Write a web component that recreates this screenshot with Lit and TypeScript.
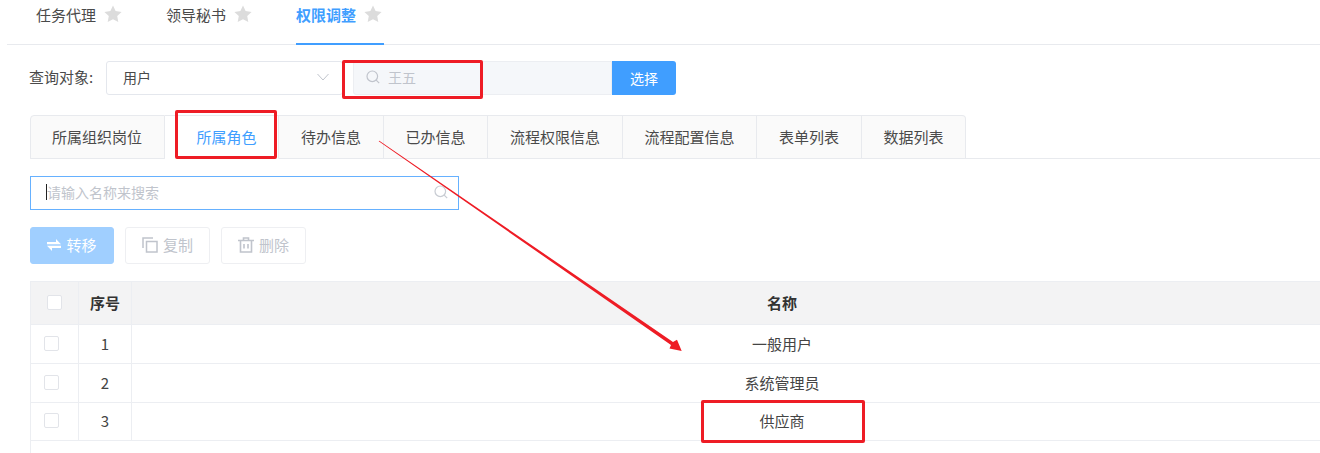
import { LitElement, html, css, svg } from "lit";
import { customElement } from "lit/decorators.js";

const star = html`<svg class="star" viewBox="0 0 18 18" width="18" height="18"><path d="M9 .6l2.600 5.500 6 .8-4.400 4.200 1.100 6L9 14.200 3.700 17.100l1.100-6L.4 6.900l6-.8z" fill="#dcdcdc"/></svg>`;
const searchIcon = (c: string) => html`<svg class="sicon" viewBox="0 0 14 14" width="14" height="14" fill="none" stroke=${c} stroke-width="1.2"><circle cx="6.300" cy="6.300" r="5.300"/><path d="M10.200 10.200l3 3"/></svg>`;

@customElement("app-root")
export class AppRoot extends LitElement {
  static styles = css`
    :host { display: block; position: relative; width: 1320px; height: 453px; overflow: hidden; background: #fff;
      font-family: "Noto Sans CJK SC", "Noto Sans", sans-serif; font-size: 15px; font-weight: 400; color: #4a4a4a; }
    .top { display: flex; height: 44px; margin-left: 7px; border-bottom: 1px solid #e8eaee; padding-left: 29px; }
    .top-tab { display: flex; align-items: flex-start; gap: 8px; height: 44px; margin-right: 44px; line-height: 30px; margin-bottom: -1px; }
    .top-tab.on { margin-right: 0; color: #409eff; font-weight: 700; border-bottom: 2px solid #409eff; height: 43px; padding-right: 2px; }
    .star { margin-top: 5px; }
    .query { display: flex; align-items: stretch; height: 34px; margin: 16px 0 0 29px; }
    .label { width: 77px; line-height: 31px; flex: none; }
    .select { width: 237px; box-sizing: border-box; border: 1px solid #e4e7ed; border-radius: 3px; display: flex; align-items: center; justify-content: space-between; padding: 0 13px 2px 16px; font-size: 14px; }
    .who { width: 259px; margin-left: 10px; box-sizing: border-box; background: #f5f7fa; border: 1px solid #eceef2; border-radius: 3px 0 0 3px; display: flex; align-items: center; gap: 8px; padding: 0 0 2px 12px; color: #c0c4cc; font-size: 14px; }
    .pick { width: 64px; background: #409eff; color: #fff; border-radius: 0 3px 3px 0; display: flex; align-items: center; justify-content: center; padding-bottom: 1px; box-sizing: border-box; font-size: 14px; }
    .tabs { display: flex; margin: 20px 0 0 30px; border-bottom: 1px solid #e8eaee; height: 43px; }
    .tab { padding: 0 21.75px; line-height: 42px; background: #fafafa; border: 1px solid #e8eaee; border-left: none; height: 42px; white-space: nowrap; }
    .tab:first-child { border-left: 1px solid #e8eaee; border-top-left-radius: 4px; padding: 0 22px 0 21px; }
    .tab:last-child { border-top-right-radius: 4px; }
    .tab.on { background: #fff; color: #409eff; border-bottom-color: #fff; padding-left: 31.5px; }
    .search { width: 429px; height: 34px; box-sizing: border-box; margin: 17px 0 0 30px; border: 1px solid #66b1ff; display: flex; align-items: center; justify-content: space-between; padding: 0 10px 3px 15px; color: #c0c4cc; font-size: 14px; }
    .ph { border-left: 1px solid #222; line-height: 16px; height: 16px; display: flex; align-items: center; }
    .actions { display: flex; gap: 11px; margin: 17px 0 0 30px; }
    .btn { height: 37px; box-sizing: border-box; width: 85px; display: flex; align-items: center; justify-content: center; gap: 5px; padding-bottom: 2px; border: 1px solid #eeeff2; border-radius: 3px; color: #c0c4cc; }
    .btn.primary { background: #a0cfff; border-color: #a0cfff; color: #fff; width: 84px; }
    table { border-collapse: collapse; table-layout: fixed; width: 1402px; margin: 17px 0 0 30px; }
    th, td { border: 1px solid #eceef2; text-align: center; padding: 0 0 2px; border-right: none; }
    th { background: #f3f3f4; height: 40px; font-weight: 700; color: #333; font-size: 15px; }
    td { height: 36px; color: #444; font-size: 15px; }
    tr.last td { height: 35px; }
    .cb { display: block; width: 15px; height: 15px; box-sizing: border-box; border: 1px solid #e2e4e9; border-radius: 2px; background: #fff; margin: 0 0 0 13px; }
    th .cb { margin-left: 16px; }
    .tail { margin-left: 30px; height: 12px; border-left: 1px solid #eceef2; }
    .red { position: absolute; box-sizing: border-box; border: 3px solid #ee1c25; border-radius: 2px; }
    .r1 { left: 342px; top: 60px; width: 141px; height: 39px; }
    .r2 { left: 175px; top: 110px; width: 102px; height: 49px; }
    .r3 { left: 701px; top: 400px; width: 164px; height: 43px; }
    .arrow { position: absolute; left: 0; top: 0; pointer-events: none; }
  `;

  render() {
    const tabs = ["所属组织岗位", "所属角色", "待办信息", "已办信息", "流程权限信息", "流程配置信息", "表单列表", "数据列表"];
    const rows = ["一般用户", "系统管理员", "供应商"];
    return html`
      <div class="top">
        <div class="top-tab"><span>任务代理</span>${star}</div>
        <div class="top-tab"><span>领导秘书</span>${star}</div>
        <div class="top-tab on"><span>权限调整</span>${star}</div>
      </div>
      <div class="query">
        <div class="label">查询对象:</div>
        <div class="select"><span>用户</span>
          <svg viewBox="0 0 12 8" width="12" height="8" fill="none" stroke="#c0c4cc" stroke-width="1"><path d="M.5 1l5.500 6 5.500-6"/></svg>
        </div>
        <div class="who">${searchIcon("#c0c4cc")}<span>王五</span></div>
        <div class="pick">选择</div>
      </div>
      <div class="tabs">
        ${tabs.map((t, i) => html`<div class="tab ${i === 1 ? "on" : ""}">${t}</div>`)}
      </div>
      <div class="search"><span class="ph">请输入名称来搜索</span>${searchIcon("#c8ccd3")}</div>
      <div class="actions">
        <div class="btn primary">
          <svg viewBox="0 0 14 12" width="14" height="12" fill="#fff"><path d="M9 0l5 5.200H0V3h9zM5 12L0 6.800h14V9H5z"/></svg>
          <span>转移</span></div>
        <div class="btn">
          <svg viewBox="0 0 16 16" width="16" height="16" fill="none" stroke="#c0c4cc" stroke-width="1.500"><path d="M11 1H1v10"/><rect x="4.500" y="4.500" width="10.500" height="10.500"/></svg>
          <span>复制</span></div>
        <div class="btn">
          <svg viewBox="0 0 16 16" width="16" height="16" fill="none" stroke="#c0c4cc" stroke-width="1.600"><path d="M0 3.500h16M5.500 3.500V1h5v2.500M2.500 3.500V15h11V3.500M6 7v4.500M10 7v4.500"/></svg>
          <span>删除</span></div>
      </div>
      <table>
        <colgroup><col style="width:48px"><col style="width:53px"><col></colgroup>
        <thead><tr><th><span class="cb"></span></th><th>序号</th><th>名称</th></tr></thead>
        <tbody>
          ${rows.map((r, i) => html`<tr class=${i === 2 ? "last" : ""}><td><span class="cb"></span></td><td>${i + 1}</td><td>${r}</td></tr>`)}
        </tbody>
      </table>
      <div class="tail"></div>
      <div class="red r1"></div>
      <div class="red r2"></div>
      <div class="red r3"></div>
      <svg class="arrow" width="1320" height="453" viewBox="0 0 1320 453">
        ${svg`<path d="M379.300 140.800 L673 342 L677 339.800 L681.700 351 L669.500 348.500 L671 345 L378.700 141.300 Z" fill="#ee1c25"/>`}
      </svg>
    `;
  }
}
